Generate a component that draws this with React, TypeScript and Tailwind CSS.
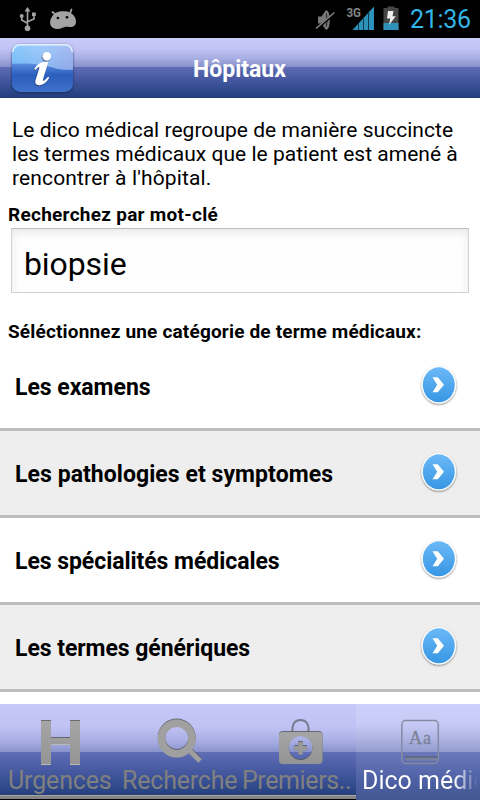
import React from "react";

const barGradient =
  "bg-[linear-gradient(180deg,#c8caf9_0%,#c0c3f3_18%,#a8aee2_34%,#8791cb_48%,#5f6eb5_48.5%,#4a5ca4_65%,#2a4587_92%,#233b78_100%)]";

const tabGradient =
  "bg-[linear-gradient(180deg,#c6c8f8_0%,#bfc2f3_25%,#a6ace1_42%,#8892cc_52.500%,#5f6eb5_53%,#4a5ca4_70%,#2c4788_94%,#253e7b_100%)]";

function StatusBar() {
  return (
    <div className="flex h-[38px] shrink-0 bg-black">
      <svg width="480" height="38" viewBox="0 0 480 38">
        <g fill="none" stroke="#a3a3a3" strokeWidth="1.6">
          <path d="M27.5 10v17M21.7 16v4l5.8 3.2M34 15.500v3.500l-6.500 2.800" />
        </g>
        <g fill="#a3a3a3">
          <path d="M27.500 7l3 4.500h-6z" />
          <circle cx="27.500" cy="28.300" r="2.800" />
          <circle cx="21.700" cy="16" r="2" />
          <path d="M32 12.500h3.800v3.500H32z" />
          <path d="M54.500 13.800C57 11.500 60 11.300 63 11.300s6 .2 8.500 2.200c3 2.200 4.700 5.200 4.500 8.500-.2 4-3.500 5.500-7 5-3-.5-5 .2-7.500 1.200-4 1.400-9.500.8-11-3.200-1.400-4 1-8.500 4-11.200z" />
          <path d="M52.500 12l3.500 3M71.500 9.500l-1.500 4" stroke="#a3a3a3" strokeWidth="1.800" strokeLinecap="round" />
        </g>
        <circle cx="57.900" cy="18" r="1.300" fill="#000" />
        <circle cx="67" cy="17.300" r="1.300" fill="#000" />
        <path d="M318 16.500h3.500l4.500-6.500q3.800.8 3.800 10t-3.800 10l-4.500-6.500H318z" fill="#777" />
        <path d="M326.300 13.500q1.800 6.500 0 13" stroke="#222" fill="none" />
        <path d="M316 29.500L334.500 13.500" stroke="#000" strokeWidth="2.600" />
        <path d="M316 28.500L334.500 12.500" stroke="#888" strokeWidth="1.400" />
        <text x="346.500" y="17" fill="#858585" fontFamily="Roboto, sans-serif" fontWeight="700" fontSize="13" textLength="14.500" lengthAdjust="spacingAndGlyphs">3G</text>
        <path d="M352.500 30L374 6.500V30z" fill="#2b92b9" />
        <path d="M358.500 23v7M363.500 17v13M368.500 12v18" stroke="#0c3a4c" strokeWidth="1" />
        <path d="M383.500 8h4V6.500h7V8h4v22h-15z" fill="#454545" />
        <path d="M383.500 23h15v7h-15z" fill="#2f91b8" />
        <path d="M388 11h5.500l-1 5.300h3.300L389 25l1.300-6.500H387z" fill="#eee" />
        <text x="410" y="28" fill="#33b5e5" fontFamily="Roboto, sans-serif" fontSize="25" textLength="61" lengthAdjust="spacing">21:36</text>
      </svg>
    </div>
  );
}

function InfoButton() {
  return (
    <button className="flex h-[60px] w-[84px] shrink-0" aria-label="Informations">
      <svg width="84" height="60" viewBox="0 38 84 60">
        <defs>
          <linearGradient id="infoBase" x1="0" y1="0" x2="0" y2="1">
            <stop offset="0" stopColor="#a7c6f8" />
            <stop offset=".4" stopColor="#5b8de0" />
            <stop offset=".65" stopColor="#2a5dbd" />
            <stop offset="1" stopColor="#4073cb" />
          </linearGradient>
          <linearGradient id="infoShine" x1="0" y1="0" x2="1" y2="0">
            <stop offset="0" stopColor="#83cdff" />
            <stop offset=".5" stopColor="#a1cdfb" />
            <stop offset="1" stopColor="#a8b9ee" />
          </linearGradient>
          <filter id="infoShadow" x="-20%" y="-20%" width="140%" height="140%">
            <feDropShadow dx="0" dy=".8" stdDeviation="1.100" floodColor="#10204a" floodOpacity=".85" />
          </filter>
          <filter id="glyphShadow" x="-20%" y="-20%" width="140%" height="140%">
            <feDropShadow dx="-.6" dy=".8" stdDeviation=".5" floodColor="#10204a" floodOpacity=".8" />
          </filter>
        </defs>
        <rect x="12" y="44" width="61" height="48" rx="8.500" fill="url(#infoBase)" filter="url(#infoShadow)" />
        <path d="M12 52.500q0-8.500 8.500-8.500h44q8.500 0 8.500 8.500v17.300q-13 .5-22-2.800-14-4.500-39-3.300z" fill="url(#infoShine)" opacity=".75" />
        <path d="M12.700 52q.5-7.300 8-7.300h43.600q7.500 0 8 7.300" fill="none" stroke="#e4f1ff" strokeWidth="1.500" />
        <g fill="#fff" filter="url(#glyphShadow)">
          <circle cx="46.800" cy="56.200" r="4.200" />
          <path d="M34.300 69q3.700-6.500 9-7h5L43 79q-.8 2.800 1.200 1.500 2-1.200 3.900-3.700l1.200.8q-4.200 7.400-10 7.600-5-.2-3.700-5l3.700-11.700q.6-2-.7-1.400-1.500.7-3 2.700z" />
        </g>
      </svg>
    </button>
  );
}

function RowArrow() {
  return (
    <svg width="42" height="46" viewBox="0 0 42 46" className="mr-[20px] mb-[3px] shrink-0">
      <defs>
        <linearGradient id="arrowFill" x1="0" y1="0" x2="0" y2="1">
          <stop offset="0" stopColor="#6bb9f7" />
          <stop offset="1" stopColor="#3796e4" />
        </linearGradient>
        <filter id="arrowShadow" x="-20%" y="-20%" width="140%" height="140%">
          <feDropShadow dx="0" dy="1" stdDeviation=".8" floodColor="#000" floodOpacity=".5" />
        </filter>
      </defs>
      <ellipse cx="20.800" cy="22.800" rx="17.300" ry="18.800" fill="#fff" filter="url(#arrowShadow)" />
      <ellipse cx="20.800" cy="22.800" rx="16" ry="17.500" fill="url(#arrowFill)" />
      <path d="M14.500 15.300h5.300l6.200 7.400-6.200 7.600h-5.300l4.700-7.600z" fill="#fff" />
    </svg>
  );
}

const categories = [
  { label: "Les examens", spacing: "tracking-[-0.03px]", tone: "bg-white" },
  { label: "Les pathologies et symptomes", spacing: "tracking-[0.06px]", tone: "bg-[#eeeeee]" },
  { label: "Les spécialités médicales", spacing: "tracking-[-0.05px]", tone: "bg-white" },
  { label: "Les termes génériques", spacing: "tracking-[-0.06px]", tone: "bg-[#eeeeee]" },
];

function TabDefs() {
  return (
    <defs>
      <linearGradient id="tabMetal" x1="0" y1="0" x2="0" y2="1">
        <stop offset="0" stopColor="#a5a5a5" />
        <stop offset="1" stopColor="#949494" />
      </linearGradient>
      <filter id="tabBevel" x="-20%" y="-20%" width="140%" height="140%">
        <feDropShadow dx="0" dy="-.8" stdDeviation=".3" floodColor="#555" floodOpacity="1" />
      </filter>
    </defs>
  );
}

function HospitalIcon() {
  return (
    <svg width="120" height="62" viewBox="0 704 120 62">
      <TabDefs />
      <path d="M41 721h10v17h19v-17h10v43.500H70v-20H51v20H41z" fill="url(#tabMetal)" filter="url(#tabBevel)" />
      <path d="M41 764.500h10M70 764.500h10M51 744.500h19" stroke="#b9b9b4" strokeWidth="1" />
    </svg>
  );
}

function SearchIcon() {
  return (
    <svg width="120" height="62" viewBox="120 704 120 62">
      <g filter="url(#tabBevel)" fill="none" stroke="#a0a0a0">
        <circle cx="176.700" cy="738.500" r="15.200" strokeWidth="7.500" />
        <path d="M189 750l11 11" strokeWidth="5" />
      </g>
    </svg>
  );
}

function KitIcon() {
  return (
    <svg width="120" height="62" viewBox="240 704 120 62">
      <path d="M292.500 732q-.8-12 8-12t8 12" fill="none" stroke="#777c8e" strokeWidth="2" />
      <path fillRule="evenodd" d="M283 732h35.500q4 0 4 4v24q0 4-4 4H283q-4 0-4-4v-24q0-4 4-4zM300.500 736a12 12 0 1 0 .1 0z" fill="url(#tabMetal)" filter="url(#tabBevel)" />
      <path d="M298.300 742h4.500v4h4v4.500h-4v4h-4.500v-4h-4V746h4z" fill="#999" filter="url(#tabBevel)" />
    </svg>
  );
}

function BookIcon() {
  return (
    <svg width="124" height="62" viewBox="356 704 124 62">
      <rect x="401.800" y="720.500" width="36.500" height="43" rx="4" fill="none" stroke="#858ba5" strokeWidth="1.500" />
      <path d="M405 756.500h33v4h-31.500q-2-1-1.500-4z" fill="#7980a0" />
      <path d="M405 757h33" stroke="#4d5675" strokeWidth="1" />
      <text x="409" y="744" fontFamily="Liberation Serif, serif" fontSize="18" fill="#7c8197" stroke="#7c8197" strokeWidth=".3" textLength="22">Aa</text>
    </svg>
  );
}

const tabs = [
  { label: "Urgences", icon: <HospitalIcon />, pad: "pl-[8px]", spacing: "tracking-[-0.15px]" },
  { label: "Recherche", icon: <SearchIcon />, pad: "pl-[2px]", spacing: "tracking-[-0.2px]" },
  { label: "Premiers..", icon: <KitIcon />, pad: "pl-[2px]", spacing: "tracking-[-0.4px]" },
];

export default function App() {
  return (
    <main className="flex h-[800px] w-[480px] flex-col overflow-hidden bg-white font-[Roboto,sans-serif] text-black">
      <StatusBar />
      <header className={"flex h-[60px] shrink-0 items-center " + barGradient}>
        <InfoButton />
        <h1 className="ml-[109px] pt-[3px] text-[23px] leading-[28px] font-bold whitespace-nowrap text-white">Hôpitaux</h1>
      </header>

      <p className="mt-[20px] h-[72px] shrink-0 pl-[12px] text-[21px] leading-[24px] whitespace-nowrap">
        <span className="block tracking-[0.03px]">Le dico médical regroupe de manière succincte</span>
        <span className="block tracking-[0.02px]">les termes médicaux que le patient est amené à</span>
        <span className="block tracking-[0.14px]">rencontrer à l'hôpital.</span>
      </p>
      <label className="mt-[13px] h-[25px] shrink-0 pl-[8px] text-[19px] leading-[24px] font-bold tracking-[0.27px] whitespace-nowrap">
        Recherchez par mot-clé
      </label>
      <div className="mr-[11px] ml-[11px] flex h-[65px] shrink-0 items-center border border-[#d2d2d2] border-t-[#bcbcbc] bg-[#fefefe] pt-[6px] pl-[12px] text-[32px] leading-[38px] tracking-[-0.1px] shadow-[inset_0_4px_8px_#e9e9e9]">
        biopsie
      </div>
      <h2 className="mt-[27px] h-[24px] shrink-0 pl-[8px] text-[19px] leading-[24px] font-bold tracking-[0.17px] whitespace-nowrap">
        Séléctionnez une catégorie de terme médicaux:
      </h2>

      <ul className="shrink-0">
        {categories.map((c) => (
          <li key={c.label} className={"flex h-[87px] items-center justify-between border-b-[3px] border-[#bdbdbd] pl-[15px] text-[23px] leading-[28px] font-bold whitespace-nowrap " + c.tone}>
            <span className={"pt-[4px] " + c.spacing}>{c.label}</span>
            <RowArrow />
          </li>
        ))}
      </ul>

      <nav className="mt-[12px] flex h-[96px] shrink-0">
        {tabs.map((t, i) => (
          <div key={t.label} className={"flex h-[96px] shrink-0 flex-col overflow-hidden bg-black " + (i === 2 ? "w-[116px]" : "w-[120px]")}>
            <div className={"h-[91px] " + tabGradient}>
              <div className="h-[62px]">{t.icon}</div>
              <div className={"h-[29px] text-[25px] leading-[29px] whitespace-nowrap text-[#808080] " + t.pad + " " + t.spacing}>{t.label}</div>
            </div>
            <div className="h-[4px] border-t border-[#a5a5a5] bg-[#858585]" />
          </div>
        ))}
        <div className="h-[96px] w-[124px] shrink-0 overflow-hidden bg-[linear-gradient(180deg,#ced0fb_0%,#c8cbf6_20%,#b0b6e5_35%,#939dd0_49.500%,#6b79ba_50%,#4d60a4_80%,#425890_100%)]">
          <div className="h-[62px]">
            <BookIcon />
          </div>
          <div className="w-[122px] overflow-hidden bg-[linear-gradient(90deg,#fff_80%,transparent_100%)] bg-clip-text pl-[6px] text-[25px] leading-[29px] whitespace-nowrap text-transparent">
            Dico médical
          </div>
        </div>
      </nav>
    </main>
  );
}
